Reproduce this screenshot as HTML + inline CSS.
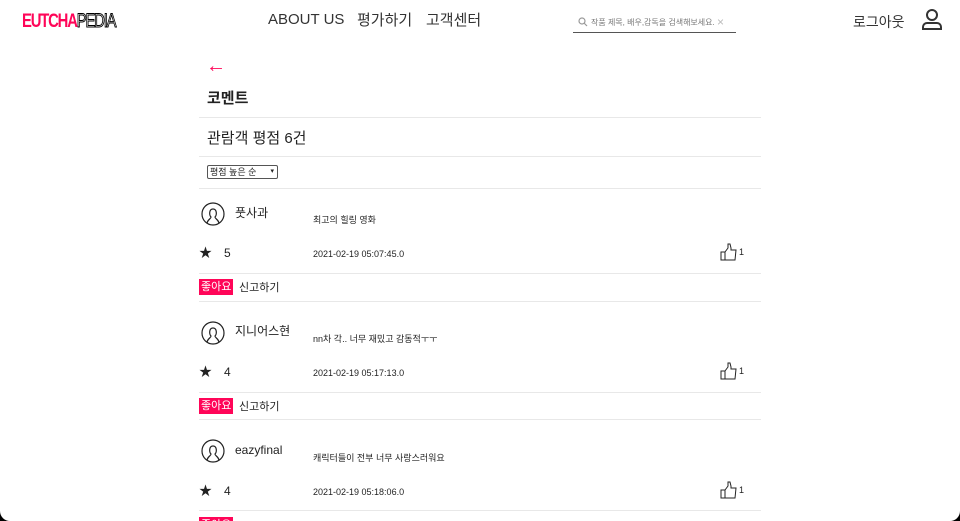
<!DOCTYPE html>
<html><head><meta charset="utf-8"><style>
html,body{margin:0;padding:0;background:#000;}
body{width:960px;height:521px;overflow:hidden;font-family:"Liberation Sans","Noto Sans CJK KR",sans-serif;color:#222;}
.page{position:relative;width:960px;height:521px;background:#fff;border-radius:0 0 10px 10px;overflow:hidden;}
.abs{position:absolute;white-space:nowrap;line-height:20px;height:20px;}
svg.abs{height:auto;line-height:normal}
.logo{left:22px;top:12px;font-weight:bold;font-size:19px;letter-spacing:-1.5px;transform:scaleX(0.78);transform-origin:left;}
.nav{top:11px;font-size:15px;color:#333;}
.line{position:absolute;left:199px;width:562px;height:1px;background:#e8e8e8;}
.pill{background:#ff0558;color:#fff;font-size:11px;padding:0 2px;height:16px;line-height:16px;}
</style></head><body><div class="page">
<div class="abs logo"><span style="color:#ff0558">EUTCHA</span><span style="color:#fff;-webkit-text-stroke:1px #000;font-weight:normal">PEDIA</span></div>
<div class="abs nav" style="left:268px;top:10px">ABOUT US</div>
<div class="abs nav" style="left:357px">평가하기</div>
<div class="abs nav" style="left:426px">고객센터</div>
<svg class="abs" style="left:578px;top:17px" width="10" height="10" viewBox="0 0 10 10"><circle cx="4" cy="4" r="3" fill="none" stroke="#999" stroke-width="1.2"/><path d="M6 6L9 9" stroke="#999" stroke-width="1.2"/></svg>
<div class="abs" style="left:591px;top:13px;font-size:8px;color:#777">작품 제목, 배우,감독을 검색해보세요.</div>
<div class="abs" style="left:717px;top:12px;font-size:12px;color:#bbb">×</div>
<div class="abs" style="left:573px;top:32px;width:163px;height:1px;background:#555"></div>
<div class="abs" style="left:853px;top:12px;font-size:14px;color:#333">로그아웃</div>
<svg class="abs" style="left:921px;top:8px" width="22" height="22" viewBox="0 0 22 22"><circle cx="11" cy="7" r="5" fill="none" stroke="#333" stroke-width="2"/><path d="M2 21v-2a4 4 0 0 1 4-4h10a4 4 0 0 1 4 4v2z" fill="none" stroke="#333" stroke-width="2"/></svg>

<div class="abs" style="left:206px;top:56px;font-size:20px;color:#ff0558">←</div>
<div class="abs" style="left:207px;top:89px;font-size:15px;font-weight:bold">코멘트</div>
<div class="line" style="top:117px"></div>
<div class="abs" style="left:207px;top:129px;font-size:15px">관람객 평점 6건</div>
<div class="line" style="top:156px"></div>
<div class="abs" style="left:207px;top:165px;width:67px;height:12px;border:1px solid #555;border-radius:2px;font-size:9px;line-height:12px;padding-left:2px;">평점 높은 순 <span style="float:right;margin-right:3px;font-size:7px">▾</span></div>
<div class="line" style="top:188px"></div>

<!-- 1 -->
<svg class="abs" style="left:201px;top:202px" width="24" height="24" viewBox="0 0 24 24"><circle cx="12" cy="12" r="11" fill="none" stroke="#222" stroke-width="1.2"/><path d="M6 21c1-4 4-4 4-6c-2-2-2-8 2-8s4 6 2 8c0 2 3 2 4 6" fill="none" stroke="#222" stroke-width="1.2"/></svg>
<div class="abs" style="left:235px;top:203px;font-size:12px">풋사과</div>
<div class="abs" style="left:313px;top:210px;font-size:9px">최고의 힐링 영화</div>
<div class="abs" style="left:199px;top:243px;font-size:13px">★</div>
<div class="abs" style="left:224px;top:243px;font-size:12px">5</div>
<div class="abs" style="left:313px;top:244px;font-size:9px">2021-02-19 05:07:45.0</div>
<svg class="abs" style="left:720px;top:243px" width="18" height="18" viewBox="0 0 18 18"><path d="M1 9h4v8H1zM5 9l3-4V1h2l1 4v2h5l-1 10H5" fill="none" stroke="#222" stroke-width="1"/></svg>
<div class="abs" style="left:739px;top:242px;font-size:9px">1</div>
<div class="line" style="top:273px"></div>
<div class="abs pill" style="left:199px;top:279px">좋아요</div>
<div class="abs" style="left:239px;top:278px;font-size:11px">신고하기</div>
<div class="line" style="top:301px"></div>
<!-- 2 -->
<svg class="abs" style="left:201px;top:321px" width="24" height="24" viewBox="0 0 24 24"><circle cx="12" cy="12" r="11" fill="none" stroke="#222" stroke-width="1.2"/><path d="M6 21c1-4 4-4 4-6c-2-2-2-8 2-8s4 6 2 8c0 2 3 2 4 6" fill="none" stroke="#222" stroke-width="1.2"/></svg>
<div class="abs" style="left:235px;top:321px;font-size:12px">지니어스현</div>
<div class="abs" style="left:313px;top:329px;font-size:9px">nn차 각.. 너무 재밌고 감동적ㅜㅜ</div>
<div class="abs" style="left:199px;top:362px;font-size:13px">★</div>
<div class="abs" style="left:224px;top:362px;font-size:12px">4</div>
<div class="abs" style="left:313px;top:363px;font-size:9px">2021-02-19 05:17:13.0</div>
<svg class="abs" style="left:720px;top:362px" width="18" height="18" viewBox="0 0 18 18"><path d="M1 9h4v8H1zM5 9l3-4V1h2l1 4v2h5l-1 10H5" fill="none" stroke="#222" stroke-width="1"/></svg>
<div class="abs" style="left:739px;top:361px;font-size:9px">1</div>
<div class="line" style="top:392px"></div>
<div class="abs pill" style="left:199px;top:398px">좋아요</div>
<div class="abs" style="left:239px;top:397px;font-size:11px">신고하기</div>
<div class="line" style="top:419px"></div>
<!-- 3 -->
<svg class="abs" style="left:201px;top:439px" width="24" height="24" viewBox="0 0 24 24"><circle cx="12" cy="12" r="11" fill="none" stroke="#222" stroke-width="1.2"/><path d="M6 21c1-4 4-4 4-6c-2-2-2-8 2-8s4 6 2 8c0 2 3 2 4 6" fill="none" stroke="#222" stroke-width="1.2"/></svg>
<div class="abs" style="left:235px;top:440px;font-size:12px">eazyfinal</div>
<div class="abs" style="left:313px;top:448px;font-size:9px">캐릭터들이 전부 너무 사랑스러워요</div>
<div class="abs" style="left:199px;top:481px;font-size:13px">★</div>
<div class="abs" style="left:224px;top:481px;font-size:12px">4</div>
<div class="abs" style="left:313px;top:482px;font-size:9px">2021-02-19 05:18:06.0</div>
<svg class="abs" style="left:720px;top:481px" width="18" height="18" viewBox="0 0 18 18"><path d="M1 9h4v8H1zM5 9l3-4V1h2l1 4v2h5l-1 10H5" fill="none" stroke="#222" stroke-width="1"/></svg>
<div class="abs" style="left:739px;top:480px;font-size:9px">1</div>
<div class="line" style="top:510px"></div>
<div class="abs pill" style="left:199px;top:517px">좋아요</div>
</div></body></html>
